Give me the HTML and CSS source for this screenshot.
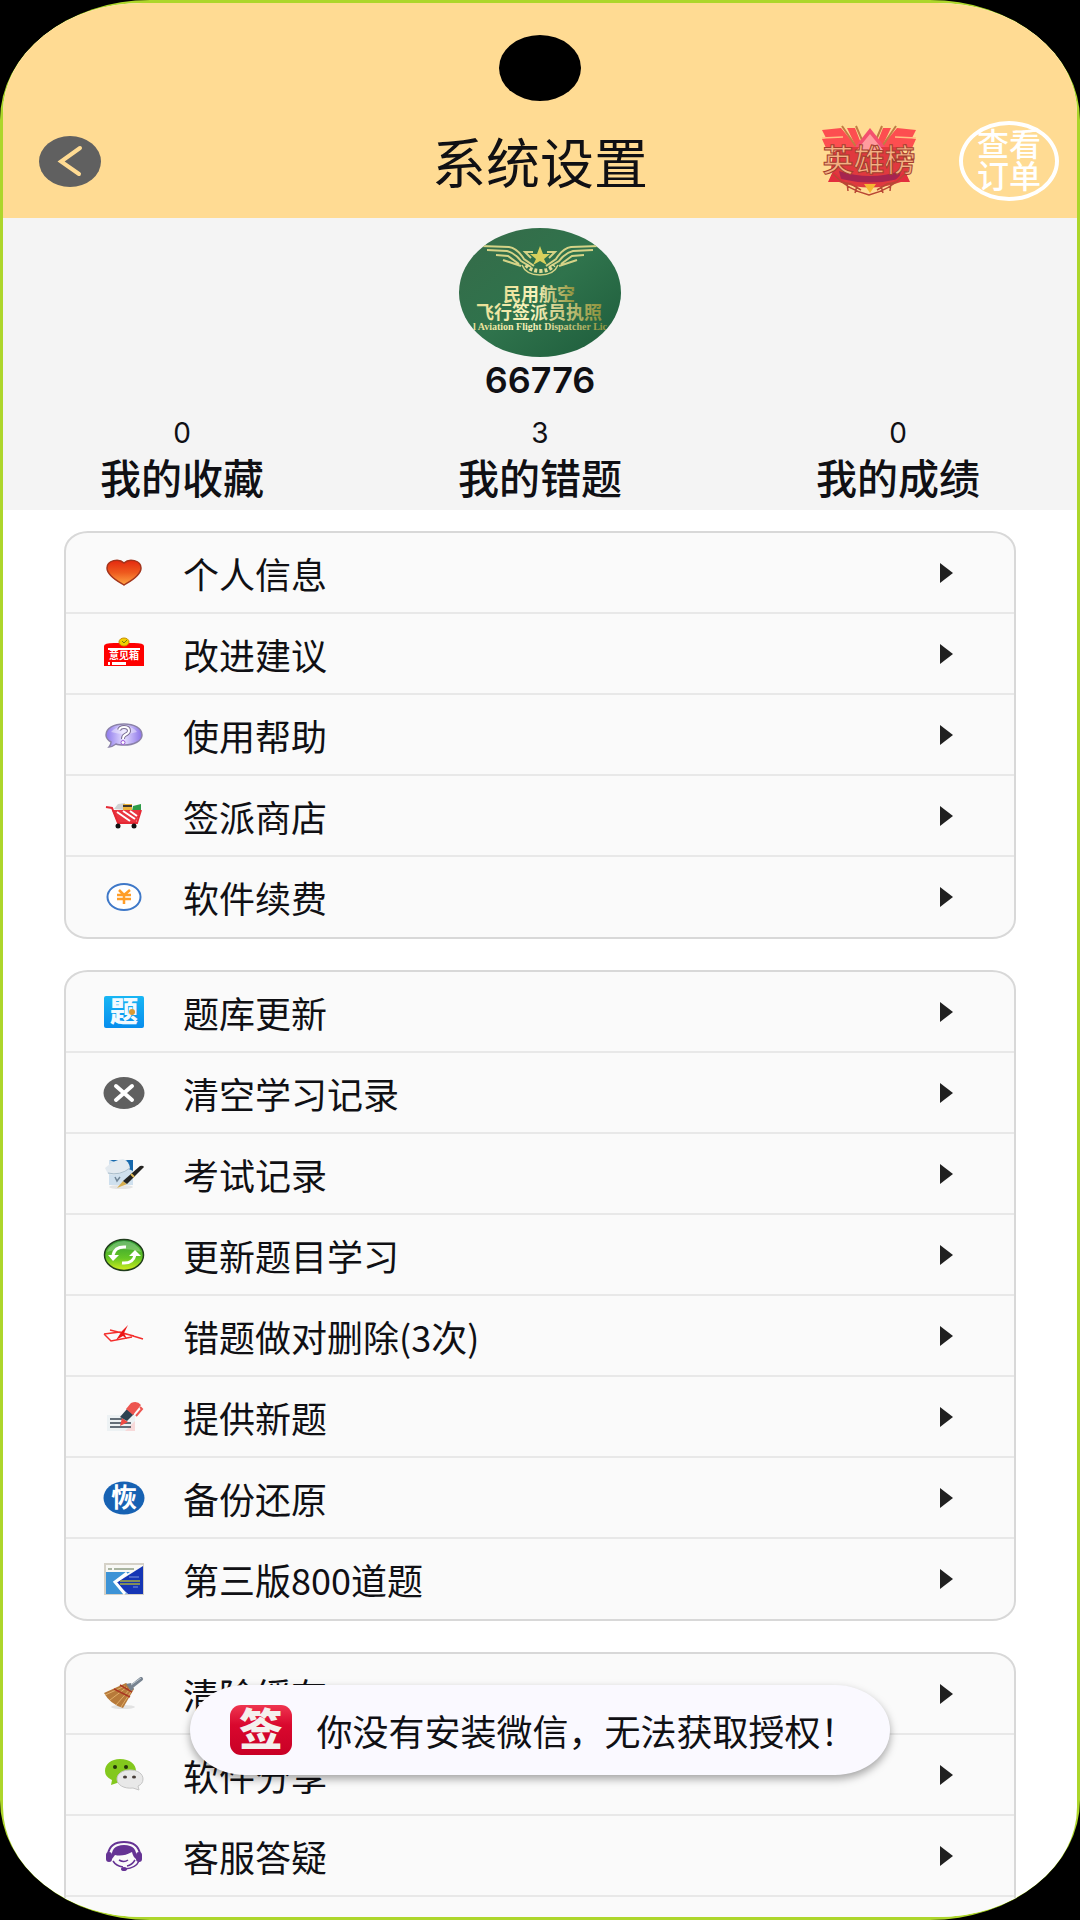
FILE: index.html
```html
<!DOCTYPE html>
<html lang="zh-CN">
<head>
<meta charset="UTF-8">
<meta name="viewport" content="width=device-width, initial-scale=1.0">
<title>系统设置</title>
<link rel="stylesheet" href="styles.css">
</head>
<body>

<div class="device">
  <div class="screen">

    <header class="topbar">
      <span class="camera"></span>
      <button type="button" class="back" aria-label="返回">
        <svg viewBox="0 0 62 51" width="62" height="51">
          <ellipse cx="31" cy="25.5" rx="31" ry="25.5" fill="#606060"/>
          <path d="M41 12 L22 25.5 L40 38" fill="none" stroke="#ffdb93" stroke-width="4" stroke-linecap="round"/>
        </svg>
      </button>
      <h1>系统设置</h1>
      <div class="actions">
        <a href="#" class="heroes" aria-label="英雄榜">
          <svg viewBox="0 0 96 72" width="96" height="72">
            <path d="M1 5 L20 3 L36 22 L34 30 L16 22 L5 23 L1 14 L5 13 Z" fill="#fd4e50"/>
            <path d="M26 3 L34 3 L40 18 L36 24 Z" fill="#fd4e50"/>
            <path d="M95 5 L76 3 L60 22 L62 30 L80 22 L91 23 L95 14 L91 13 Z" fill="#fd4e50"/>
            <path d="M70 3 L62 3 L56 18 L60 24 Z" fill="#fd4e50"/>
            <path d="M1 13 L22 12 M95 13 L74 12" stroke="#ffc083" stroke-width="1.5"/>
            <path d="M21 1 L38 26 M35 1 L44 22 M75 1 L58 26 M61 1 L52 22" stroke="#bf7d43" stroke-width="2"/>
            <path d="M49 3 L68 27 L49 34 L30 27 Z" fill="#f4506f"/>
            <path d="M49 11 L62 27 L49 32 L36 27 Z" fill="#ff9c9e"/>
            <path d="M20 22 H76 L86 30 L88 44 L80 57 Q49 68 18 57 L10 44 L12 28 Z" fill="#e0393f"/>
            <path d="M49 9 L62 25 L49 28 L36 25 Z" fill="#ff9c9e"/>
            <path d="M18 46 Q49 56 80 46 L78 54 Q49 61 20 54 Z" fill="#a62450"/>
            <path d="M7 57 L12 46 L24 57 Z M89 57 L84 46 L72 57 Z" fill="#e22e3d"/>
            <path d="M43 59 H55 L49 68 Z" fill="#f5b733"/>
            <path d="M12 49 Q27 65 48 70 Q69 65 84 49 M20 57 L30 59 L40 65 M27 66 L26 58 M34 68 L36 61 M76 57 L66 59 L56 65 M69 66 L70 58 M62 68 L60 61" fill="none" stroke="#b94735" stroke-width="1.5"/>
            <text class="heroes-text" x="48" y="46" text-anchor="middle">英雄榜</text>
          </svg>
        </a>
        <button type="button" class="orders">查看<br>订单</button>
      </div>
    </header>

    <section class="profile">
      <svg class="avatar" viewBox="0 0 162 129" width="162" height="129">
        <defs>
          <clipPath id="face"><ellipse cx="81" cy="64.5" rx="81" ry="64.5"/></clipPath>
          <linearGradient id="cover" x1="0" y1="0" x2="1" y2="1">
            <stop offset="0" stop-color="#366b49"/>
            <stop offset="0.5" stop-color="#2f734c"/>
            <stop offset="1" stop-color="#1d5c3b"/>
          </linearGradient>
          <linearGradient id="gold" x1="0" x2="1">
            <stop offset="0" stop-color="#e9df94"/>
            <stop offset="0.45" stop-color="#f8f4bd"/>
            <stop offset="1" stop-color="#8d913a"/>
          </linearGradient>
        </defs>
        <g clip-path="url(#face)">
          <rect width="162" height="129" fill="url(#cover)"/>
          <path d="M22 18 L50 19 Q58 20 65 31 L75 38 M28 22 L48 23 Q56 25 62 33 L72 39 M37 27 L49 28 L60 36 M44 32 L62 38 M140 18 L112 19 Q104 20 97 31 L87 38 M134 22 L114 23 Q106 25 100 33 L90 39 M125 27 L113 28 L102 36 M118 32 L100 38" fill="none" stroke="#d5d387" stroke-width="2"/>
          <path d="M63 37 Q67 47 81 47 Q95 47 99 37" fill="none" stroke="#d5d387" stroke-width="1.5"/>
          <path d="M67 37 Q72 43 81 43 Q90 43 95 37" fill="none" stroke="#e0dc95" stroke-width="4" stroke-dasharray="3 2"/>
          <path d="M74 24 H66 L72 30 M88 24 H96 L90 30" fill="none" stroke="#d5d387" stroke-width="2"/>
          <path d="M81 18 L84 26 L91 26 L85 31 L88 37 L81 33 L74 37 L77 31 L71 26 L78 26 Z" fill="#d8d05c"/>
          <text class="cover-title" x="80" y="73" text-anchor="middle" fill="url(#gold)">民用航空</text>
          <text class="cover-title" x="80" y="91" text-anchor="middle" fill="url(#gold)">飞行签派员执照</text>
          <text class="cover-latin" x="81" y="102" text-anchor="middle" fill="url(#gold)">l Aviation Flight Dispatcher Lic</text>
        </g>
      </svg>
      <p class="name">66776</p>
      <div class="stats">
        <a href="#"><span class="count">0</span><span class="label">我的收藏</span></a>
        <a href="#"><span class="count">3</span><span class="label">我的错题</span></a>
        <a href="#"><span class="count">0</span><span class="label">我的成绩</span></a>
      </div>
    </section>

    <main class="menu">
      <ul class="card">
        <li><a href="#">
          <svg class="icon" viewBox="0 0 42 34">
            <defs><linearGradient id="heart" x1="0" y1="0" x2="0" y2="1"><stop offset="0" stop-color="#e5280f"/><stop offset="0.5" stop-color="#ee5a1e"/><stop offset="1" stop-color="#ffa545"/></linearGradient></defs>
            <path d="M21 29 C16 26 4 20 4 12 C4 4 16 2 21 7 C26 2 38 4 38 12 C38 20 26 26 21 29 Z" fill="url(#heart)" stroke="#a3341c" stroke-width="1.5"/>
          </svg>
          <span>个人信息</span></a></li>
        <li><a href="#">
          <svg class="icon" viewBox="0 0 42 34">
            <path d="M1 9 Q1 6 11 6 H31 Q41 6 41 9 V29 H1 Z" fill="#fe0000"/>
            <ellipse cx="21" cy="5" rx="5" ry="4" fill="#f0d000" stroke="#c98c00"/>
            <path d="M19 4 L21 6 L24 3" fill="none" stroke="#6b7d10"/>
            <rect x="5" y="11" width="32" height="2" fill="#fff"/>
            <text class="box-text" x="21" y="22" text-anchor="middle">意见箱</text>
            <path d="M5 25 H7 V28 H5 Z M9 25 H23 V28 H9 Z" fill="#fff"/>
          </svg>
          <span>改进建议</span></a></li>
        <li><a href="#">
          <svg class="icon" viewBox="0 0 42 34">
            <defs><linearGradient id="bubble" x1="0" x2="1"><stop offset="0" stop-color="#8d78ec"/><stop offset="0.5" stop-color="#e5deff"/><stop offset="1" stop-color="#8a72e8"/></linearGradient></defs>
            <path d="M21 6 C31 6 39 10 39 17 C39 23 31 27 21 27 C18 27 15 27 13 26 Q9 29 6 29 Q8 27 8 24 Q3 21 3 17 C3 10 11 6 21 6 Z" fill="url(#bubble)" stroke="#8b82a8" stroke-width="1.5"/>
            <path d="M8 14 Q12 9 21 8 Q31 9 34 14 Q22 18 8 14 Z" fill="#fff" opacity="0.4"/>
            <path d="M16 12 Q17 9 21 9 Q26 9 26 13 Q26 15 22 17 Q20 18 20 21" fill="none" stroke="#786c91" stroke-width="4"/>
            <path d="M16 12 Q17 9 21 9 Q26 9 26 13 Q26 15 22 17 Q20 18 20 21" fill="none" stroke="#fff" stroke-width="2"/>
            <circle cx="20" cy="24.5" r="2" fill="#fff" stroke="#9b5bd6"/>
          </svg>
          <span>使用帮助</span></a></li>
        <li><a href="#">
          <svg class="icon" viewBox="0 0 42 34">
            <path d="M11 10 L15 5 L22 4 V11 Z" fill="#cfd2d3"/>
            <path d="M20 5 H29 V11 H20 Z" fill="#edb33a"/><path d="M20 7 H29" stroke="#40382b" stroke-width="2"/>
            <path d="M30 7 L38 5 V12 H29 Z" fill="#2d9d47"/>
            <path d="M9 11 H38 L33 23 H14 Z" fill="#e93440"/>
            <path d="M14 13 L27 22 M20 12 L32 20 M27 12 L34 17" stroke="#fff" stroke-width="2"/>
            <path d="M3 8 L9 9 L15 24 H34 L38 11" fill="none" stroke="#e52834" stroke-width="2"/>
            <circle cx="15" cy="27" r="2.5" fill="#111"/><circle cx="31" cy="27" r="2.5" fill="#111"/>
          </svg>
          <span>签派商店</span></a></li>
        <li><a href="#">
          <svg class="icon" viewBox="0 0 42 34">
            <ellipse cx="21" cy="17" rx="16.5" ry="13" fill="#fff" stroke="#3e78c8" stroke-width="2"/>
            <path d="M16 10 L21 15 L27 10 M14 15 H28 M14 19 H28 M21 15 V24" fill="none" stroke="#ff9d27" stroke-width="2.5"/>
          </svg>
          <span>软件续费</span></a></li>
      </ul>

      <ul class="card">
        <li><a href="#">
          <svg class="icon" viewBox="0 0 42 34">
            <defs><linearGradient id="quiz" x1="0" y1="0" x2="0" y2="1"><stop offset="0" stop-color="#18b6f4"/><stop offset="1" stop-color="#078ded"/></linearGradient></defs>
            <rect x="1" y="1" width="40" height="32" rx="2" fill="url(#quiz)"/>
            <text class="quiz-text" x="21" y="27" text-anchor="middle">题</text>
            <circle cx="29" cy="17" r="3" fill="#d99a35"/>
          </svg>
          <span>题库更新</span></a></li>
        <li><a href="#">
          <svg class="icon" viewBox="0 0 42 34">
            <ellipse cx="21" cy="17" rx="20.5" ry="16" fill="#606060"/>
            <path d="M13 10 L29 24 M29 10 L13 24" stroke="#fff" stroke-width="4" stroke-linecap="round"/>
          </svg>
          <span>清空学习记录</span></a></li>
        <li><a href="#">
          <svg class="icon" viewBox="0 0 42 34">
            <ellipse cx="18" cy="30" rx="12" ry="2" fill="#e4e4e4"/>
            <path d="M6 3 H30 V28 H6 Z" fill="#cfe0ee"/>
            <path d="M7 3 H30 V14 Z" fill="#1769ad"/>
            <path d="M2 11 Q10 3 20 2 Q26 4 27 11 Q17 20 5 17 Z" fill="#e3eaf0"/>
            <path d="M5 16 Q17 19 27 11" fill="none" stroke="#a9bdcb"/>
            <path d="M12 20 L14 24 L17 20" fill="none" stroke="#718697" stroke-width="1.5"/>
            <path d="M14 31 L20 24 L24 27 Z" fill="#d6ad4d"/>
            <path d="M20 24 L37 9 Q40 8 41 10 L24 27 Z" fill="#242321"/>
            <path d="M28 17 L31 20" stroke="#dfb954" stroke-width="2"/>
          </svg>
          <span>考试记录</span></a></li>
        <li><a href="#">
          <svg class="icon" viewBox="0 0 42 34">
            <defs><linearGradient id="reload" x1="0" y1="0" x2="0" y2="1"><stop offset="0" stop-color="#2f9b37"/><stop offset="0.6" stop-color="#65c625"/><stop offset="1" stop-color="#d3ee1e"/></linearGradient></defs>
            <ellipse cx="21" cy="17" rx="19.5" ry="15.5" fill="url(#reload)" stroke="#203c1c" stroke-width="1.5"/>
            <path d="M10 17 Q12 8 23 9 M32 17 Q30 26 19 25" fill="none" stroke="#fff" stroke-width="3"/>
            <path d="M5 17 H16 L10 23 Z M26 18 L32 12 L38 18 Z" fill="#fff"/>
            <path d="M4 14 Q8 4 21 3 Q34 4 38 14 Q20 8 4 14 Z" fill="#fff" opacity="0.25"/>
          </svg>
          <span>更新题目学习</span></a></li>
        <li><a href="#">
          <svg class="icon" viewBox="0 0 42 34">
            <path d="M1 15 L17 13 L40 20 M1 15 L8 22 L29 18 M7 11 L31 17" fill="none" stroke="#f42e2c" stroke-width="1.5"/>
            <path d="M25 6 L19 12 L13 21 L20 17 L24 20 L21 14 Z" fill="#ec1515"/>
          </svg>
          <span>错题做对删除(3次)</span></a></li>
        <li><a href="#">
          <svg class="icon" viewBox="0 0 42 34">
            <path d="M4 15 H32 V31 H4 Z" fill="#edf2f4"/><path d="M22 31 L32 21 V31 Z" fill="#f7d9d9"/>
            <path d="M7 19 H19 M7 23 H28 M7 27 H28" stroke="#36434f" stroke-width="1.5"/>
            <path d="M17 26 L19 18 L25 22 Z" fill="#f04b43"/>
            <path d="M17 17 L24 9 L31 14 L24 21 Z" fill="#2d4352"/>
            <path d="M23 9 L28 3 Q34 0 38 5 L30 15 Z" fill="#ed5550"/>
            <path d="M37 7 L39 9 L33 16" fill="none" stroke="#ed5550" stroke-width="2"/>
          </svg>
          <span>提供新题</span></a></li>
        <li><a href="#">
          <svg class="icon" viewBox="0 0 42 34">
            <ellipse cx="21" cy="17" rx="20.5" ry="16.5" fill="#1762b3"/>
            <text class="restore-text" x="21" y="26" text-anchor="middle">恢</text>
          </svg>
          <span>备份还原</span></a></li>
        <li><a href="#">
          <svg class="icon" viewBox="0 0 42 34">
            <rect x="1" y="1" width="40" height="32" fill="#d5d1c7"/>
            <rect x="3" y="3" width="37" height="29" fill="#f8f8f5"/>
            <path d="M3 10 H27 L14 19 L24 32 H3 Z" fill="#3d93d6"/>
            <path d="M5 7 H9 M11 7 H31" stroke="#8e9d84" stroke-width="1.5"/>
            <path d="M40 4 V32 H25 L13 21 Z" fill="#1535b5"/>
            <path d="M24 11 L12 20 L22 32" fill="none" stroke="#fff" stroke-width="3"/>
            <path d="M17 19 H37 M17 22 H37" stroke="#a7ac3c" stroke-width="1.5"/>
            <path d="M26 15 H36 M30 25 H35" stroke="#8099dc"/>
          </svg>
          <span>第三版800道题</span></a></li>
      </ul>

      <ul class="card">
        <li><a href="#">
          <svg class="icon" viewBox="0 0 42 34">
            <ellipse cx="20" cy="30" rx="12" ry="2" fill="#e2e2e2"/>
            <path d="M1 16 L23 6 L31 12 L20 31 Q7 27 1 16 Z" fill="#b77a3a"/>
            <path d="M2 18 L22 9 M7 23 L24 10 M13 28 L27 12 M18 30 L29 13" stroke="#e1ae68" stroke-width="1"/>
            <path d="M11 12 L27 20 M17 8 L29 15" stroke="#aa3823" stroke-width="1.5"/>
            <path d="M23 7 L28 6 L31 12 L28 14 Z" fill="#788089"/>
            <path d="M28 10 L38 2" stroke="#778390" stroke-width="4" stroke-linecap="round"/>
            <path d="M28 8 L38 1" stroke="#bcc6ce"/>
          </svg>
          <span>清除缓存</span></a></li>
        <li><a href="#">
          <svg class="icon" viewBox="0 0 42 34">
            <path d="M17 1 C27 1 33 6 33 13 C33 20 26 24 17 24 L8 27 L9 22 Q2 19 2 13 C2 6 8 1 17 1 Z" fill="#83c81d"/>
            <ellipse cx="12" cy="9" rx="2" ry="2" fill="#243409"/><ellipse cx="23" cy="9" rx="2" ry="2" fill="#243409"/>
            <path d="M27 12 C35 12 40 16 40 21 Q40 26 35 28 L36 32 L30 30 C21 31 14 27 14 21 C14 16 19 12 27 12 Z" fill="#e8e8e8" stroke="#c5c5c5"/>
            <ellipse cx="22" cy="19" rx="2" ry="1.5" fill="#463d37"/><ellipse cx="31" cy="19" rx="2" ry="1.5" fill="#463d37"/>
          </svg>
          <span>软件分享</span></a></li>
        <li><a href="#">
          <svg class="icon" viewBox="0 0 42 34">
            <path d="M5 15 Q7 3 21 3 Q35 3 37 15" fill="none" stroke="#653394" stroke-width="2"/>
            <path d="M9 20 Q7 6 21 6 Q35 6 33 20 Q30 18 29 13 Q20 18 12 16 Z" fill="#653394"/>
            <rect x="3" y="13" width="6" height="10" rx="3" fill="#653394"/><rect x="33" y="13" width="6" height="10" rx="3" fill="#653394"/>
            <path d="M10 22 Q13 27 20 28 M32 21 Q29 26 24 27 M36 22 Q33 29 22 30" fill="none" stroke="#653394" stroke-width="1.5"/>
            <path d="M16 21 Q21 24 25 21" fill="none" stroke="#653394" stroke-width="1.5"/>
            <ellipse cx="21" cy="30" rx="3" ry="2" fill="#653394"/>
          </svg>
          <span>客服答疑</span></a></li>
        <li><a href="#"></a></li>
      </ul>
    </main>
  </div>

  <div class="toast" role="status">
    <svg viewBox="0 0 62 50" width="62" height="50">
      <defs><linearGradient id="app" x1="0" y1="0" x2="0" y2="1"><stop offset="0" stop-color="#ef3650"/><stop offset="0.4" stop-color="#d9082e"/><stop offset="1" stop-color="#c90026"/></linearGradient></defs>
      <rect width="62" height="50" rx="11" fill="url(#app)"/>
      <text class="app-text" x="31" y="41" text-anchor="middle">签</text>
    </svg>
    <span>你没有安装微信，无法获取授权！</span>
  </div>
</div>

</body>
</html>
```
FILE: styles.css
```css
* {
  box-sizing: border-box;
}
body {
  margin: 0;
  background-color: #000;
  color: #101014;
  font-family: "Noto Sans CJK SC", sans-serif;
  font-size: 36px;
}
h1, p, ul {
  margin: 0;
  padding: 0;
}
a {
  color: inherit;
  text-decoration: none;
}
button {
  padding: 0;
  border: none;
  background: none;
  font-family: inherit;
  cursor: pointer;
}
svg {
  display: block;
}

/* green edge thins out to nothing in the corners */
.device {
  position: relative;
  height: 100vh;
  padding: 3px;
  overflow: hidden;
  background-color: #add62b;
  border-radius: 150px / 120px;
}
.screen {
  height: 100%;
  overflow: hidden;
  background-color: #fff;
  border-radius: 140px / 110px;
}

.topbar {
  position: relative;
  display: grid;
  grid-template-columns: 1fr auto 1fr;
  align-items: center;
  height: 215px;
  padding: 101px 18px 0;
  background-color: #ffdb93;
}
.camera {
  position: absolute;
  top: 32px;
  left: 50%;
  width: 82px;
  height: 66px;
  margin-left: -41px;
  background-color: #000;
  border-radius: 50%;
}
.back {
  justify-self: start;
  margin-left: 18px;
}
.topbar h1 {
  font-size: 54px;
  font-weight: 400;
  line-height: 64px;
}
.actions {
  display: flex;
  align-items: center;
  justify-content: flex-end;
  gap: 42px;
}
.heroes-text {
  font-size: 31px;
  font-weight: 500;
  fill: #f3b083;
  stroke: #a43d2d;
  stroke-width: 1px;
}
.orders {
  width: 100px;
  height: 80px;
  padding-bottom: 6px;
  border: 4px solid #fff;
  border-radius: 50%;
  color: #fff;
  font-size: 32px;
  font-weight: 500;
  line-height: 32px;
}

.profile {
  display: flex;
  flex-direction: column;
  align-items: center;
  padding: 10px 0 8px;
  background-color: #f4f4f4;
}
.cover-title {
  font-size: 18px;
  font-weight: 700;
}
.cover-latin {
  font-family: "Liberation Serif", serif;
  font-size: 10px;
  font-weight: 700;
}
.name {
  font-family: Inter, sans-serif;
  font-size: 36px;
  font-weight: 600;
  line-height: 46px;
}
.stats {
  display: flex;
  width: 100%;
  padding-top: 12px;
}
.stats a {
  flex: 1;
  display: flex;
  flex-direction: column;
  align-items: center;
}
.count {
  font-family: Inter, sans-serif;
  font-size: 28px;
  line-height: 36px;
}
.label {
  font-size: 41px;
  font-weight: 500;
  line-height: 51px;
}

.menu {
  display: flex;
  flex-direction: column;
  gap: 31px;
  padding: 21px 61px;
}
.card {
  list-style: none;
  background-color: #fafafa;
  border: 2px solid #d8d8d8;
  border-radius: 24px / 20px;
}
.card li + li {
  border-top: 2px solid #e8e8e8;
}
.card li:last-child {
  padding-bottom: 1px;
}
.card a {
  display: flex;
  align-items: center;
  gap: 38px;
  height: 79px;
  padding: 0 61px 0 37px;
}
.card a::after {
  content: "";
  margin-left: auto;
  border-left: 13px solid #202020;
  border-top: 10px solid transparent;
  border-bottom: 10px solid transparent;
}
.icon {
  width: 42px;
  height: 34px;
}
.box-text {
  font-size: 10px;
  font-weight: 700;
  fill: #fff;
}
.quiz-text {
  font-size: 28px;
  font-weight: 900;
  fill: #f2faff;
}
.restore-text {
  font-size: 26px;
  font-weight: 700;
  fill: #fff;
}

.toast {
  position: absolute;
  left: 0;
  right: 0;
  bottom: 145px;
  display: flex;
  align-items: center;
  gap: 24px;
  width: fit-content;
  height: 90px;
  margin: 0 auto;
  padding: 0 33px 0 40px;
  background-color: #faf9ff;
  border-radius: 55px / 45px;
  box-shadow: 0 4px 9px rgba(0, 0, 0, 0.35);
}
.app-text {
  font-size: 44px;
  font-weight: 900;
  fill: #f4f0ed;
}
```
